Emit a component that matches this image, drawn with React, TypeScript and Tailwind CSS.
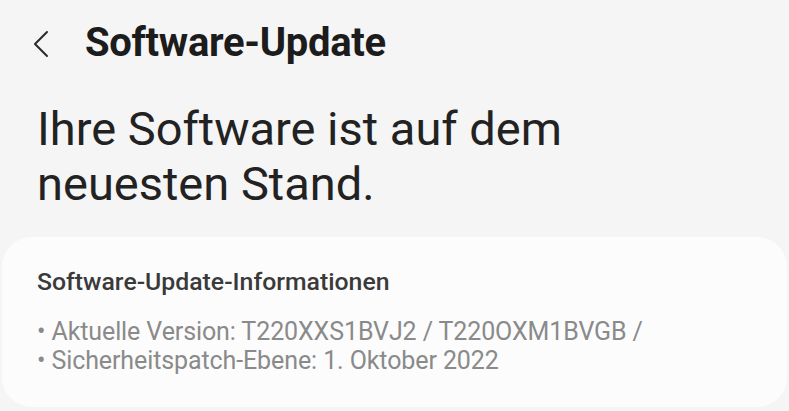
export default function App() {
  return (
    <div className="h-[411px] w-[789px] overflow-hidden bg-[#f5f5f5] font-['Roboto',sans-serif]">
      <header className="flex h-[86px] items-center">
        <svg className="ml-[32px] mt-[1px]" width="18" height="28" viewBox="0 0 18 28" fill="none">
          <path d="M15 2 L3 14 L15 26" stroke="#2a2a2a" strokeWidth="2" strokeLinecap="round" strokeLinejoin="round" />
        </svg>
        <h1 className="ml-[35px] text-[40px] font-bold tracking-[-0.3px] text-[#1c1c1c]">Software-Update</h1>
      </header>

      <p className="mt-[15px] pl-[37px] text-[47px] leading-[55px] text-[#222]">
        Ihre Software ist auf dem
        <br />
        neuesten Stand.
      </p>

      <section className="mx-[2px] mt-[26px] h-[170px] rounded-[30px] bg-[#fcfcfc] px-[35px] pt-[31px]">
        <h2 className="text-[24.8px] font-medium leading-[28px] text-[#3a3a3a]">Software-Update-Informationen</h2>
        <ul className="mt-[21px] text-[25px] leading-[29px] tracking-[-0.1px] text-[#8a8a8a]">
          <li>• Aktuelle Version: T220XXS1BVJ2 / T220OXM1BVGB /</li>
          <li>• Sicherheitspatch-Ebene: 1. Oktober 2022</li>
        </ul>
      </section>
    </div>
  );
}
